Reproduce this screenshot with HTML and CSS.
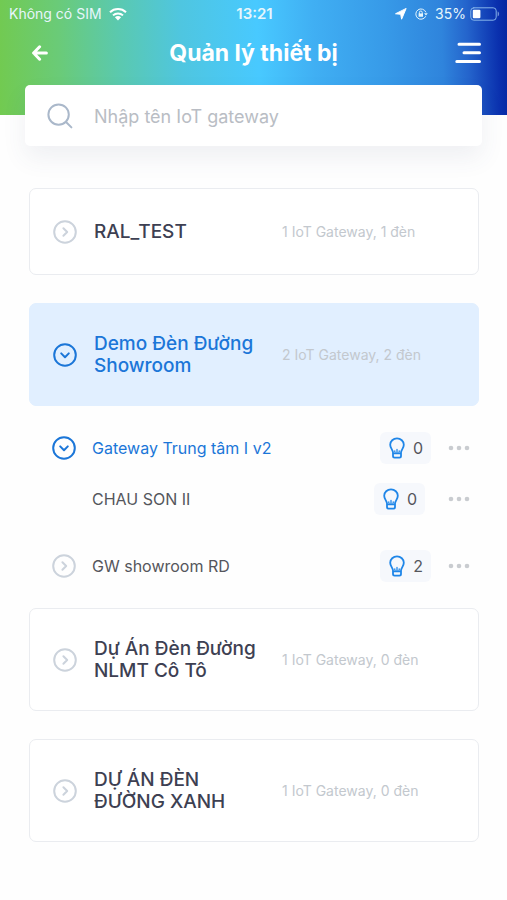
FILE: index.html
```html
<!DOCTYPE html>
<html lang="vi">
<head>
<meta charset="utf-8">
<meta name="viewport" content="width=device-width, initial-scale=1">
<title>Quản lý thiết bị</title>
<link rel="stylesheet" href="styles.css">
</head>
<body>
<svg class="sprite" aria-hidden="true">
  <symbol id="chevron-right" viewBox="0 0 24 24"><circle cx="12" cy="12" r="10.8"/><path d="M10.4 8.2 14.2 12l-3.8 3.8"/></symbol>
  <symbol id="chevron-down" viewBox="0 0 24 24"><circle cx="12" cy="12" r="10.8"/><path d="M8.2 10.4 12 14.2l3.8-3.8"/></symbol>
  <symbol id="bulb" viewBox="0 0 16 22"><path stroke-width="1.8" d="M4 15.4C3.7 12.6 1.2 11.2 1.2 7.8a6.8 6.4 0 0 1 13.6 0c0 3.4-2.5 4.8-2.8 7.6v3.6a1.6 1.6 0 0 1-1.6 1.6H5.6A1.6 1.6 0 0 1 4 19Z"/><path stroke-width="1.3" d="M4.4 16.6h7.2M8 16.4v-4M5.8 13.8v1.2a1.4 1.4 0 0 0 1.4 1.4M10.2 13.8v1.2a1.4 1.4 0 0 1-1.4 1.4"/></symbol>
  <symbol id="dots" viewBox="0 0 22 6"><circle cx="3" cy="3" r="2.3"/><circle cx="11" cy="3" r="2.3"/><circle cx="19" cy="3" r="2.3"/></symbol>
</svg>

<header class="header">
  <div class="status">
    <div class="status-left">
      <span>Không có SIM</span>
      <svg class="wifi" viewBox="0 0 18 14" aria-hidden="true"><path d="M1 5.2a11.6 11.6 0 0 1 16 0M4 8.4a7.2 7.2 0 0 1 10 0"/><path class="solid" d="M5.9 10.3a4.6 4.6 0 0 1 6.2 0L9 13.5Z"/></svg>
    </div>
    <time class="clock">13:21</time>
    <div class="status-right">
      <svg class="location" viewBox="0 0 12 12" aria-hidden="true"><path d="M11 .8 6.6 11.2 5.7 6.3.9 5.8Z"/></svg>
      <svg class="lock" viewBox="0 0 14 12" aria-hidden="true"><path d="M11.6 8.6A5.2 5.2 0 1 1 11.8 4"/><path d="M5.4 5.6V4.4a1.4 1.4 0 0 1 2.8 0v1.2"/><path class="solid" d="M4.6 5.4H9v3.4H4.6ZM10 5.2h3.8L12 7.6Z"/></svg>
      <span class="percent">35%<svg class="battery" viewBox="0 0 30 14" aria-hidden="true"><rect class="shell" x=".8" y=".8" width="25.4" height="12.4" rx="3"/><rect class="charge" x="2.8" y="2.8" width="7.6" height="8.4" rx="1"/><path class="cap" d="M27.6 4.6c2 .6 2 4.2 0 4.8Z"/></svg></span>
    </div>
  </div>
  <div class="titlebar">
    <button class="icon-button back-button" type="button" aria-label="Quay lại">
      <svg class="back" viewBox="0 0 16 16" aria-hidden="true"><path d="M14.4 8H1.8M7.6 1.8 1.6 8l6 6.2"/></svg>
    </button>
    <h1 class="title">Quản lý thiết bị</h1>
    <button class="icon-button menu-button" type="button" aria-label="Menu">
      <svg class="menu" viewBox="0 0 26 22" aria-hidden="true"><path d="M4 2.2h20.5M9 10.8h15.5M1.8 19.4h22.7"/></svg>
    </button>
  </div>
</header>

<main class="content">
  <label class="search">
    <svg class="magnifier" viewBox="0 0 26 26" aria-hidden="true"><circle cx="11.6" cy="11.6" r="10.2"/><path d="m19 19 5.4 5.4"/></svg>
    <input class="search-input" type="search" placeholder="Nhập tên IoT gateway" aria-label="Nhập tên IoT gateway">
  </label>

  <div class="projects">
    <button class="card short" type="button" aria-expanded="false">
      <svg class="toggle" aria-hidden="true"><use href="#chevron-right"/></svg>
      <span class="name">RAL_TEST</span>
      <span class="summary">1 IoT Gateway, 1 đèn</span>
    </button>

    <section class="group">
      <button class="card open" type="button" aria-expanded="true">
        <svg class="toggle active" aria-hidden="true"><use href="#chevron-down"/></svg>
        <span class="name">Demo Đèn Đường Showroom</span>
        <span class="summary">2 IoT Gateway, 2 đèn</span>
      </button>
      <ul class="gateways">
        <li class="gateway">
          <button class="icon-button" type="button" aria-label="Thu gọn"><svg class="toggle active" aria-hidden="true"><use href="#chevron-down"/></svg></button>
          <span class="gateway-name active-name">Gateway Trung tâm I v2</span>
          <span class="count"><svg class="bulb" aria-hidden="true"><use href="#bulb"/></svg>0</span>
          <button class="icon-button" type="button" aria-label="Tùy chọn"><svg class="dots" aria-hidden="true"><use href="#dots"/></svg></button>
        </li>
        <li class="gateway child">
          <span class="gateway-name">CHAU SON II</span>
          <span class="count"><svg class="bulb" aria-hidden="true"><use href="#bulb"/></svg>0</span>
          <button class="icon-button" type="button" aria-label="Tùy chọn"><svg class="dots" aria-hidden="true"><use href="#dots"/></svg></button>
        </li>
        <li class="gateway">
          <button class="icon-button" type="button" aria-label="Mở rộng"><svg class="toggle" aria-hidden="true"><use href="#chevron-right"/></svg></button>
          <span class="gateway-name">GW showroom RD</span>
          <span class="count"><svg class="bulb" aria-hidden="true"><use href="#bulb"/></svg>2</span>
          <button class="icon-button" type="button" aria-label="Tùy chọn"><svg class="dots" aria-hidden="true"><use href="#dots"/></svg></button>
        </li>
      </ul>
    </section>

    <button class="card" type="button" aria-expanded="false">
      <svg class="toggle" aria-hidden="true"><use href="#chevron-right"/></svg>
      <span class="name">Dự Án Đèn Đường NLMT Cô Tô</span>
      <span class="summary">1 IoT Gateway, 0 đèn</span>
    </button>

    <button class="card" type="button" aria-expanded="false">
      <svg class="toggle" aria-hidden="true"><use href="#chevron-right"/></svg>
      <span class="name">DỰ ÁN ĐÈN ĐƯỜNG XANH</span>
      <span class="summary">1 IoT Gateway, 0 đèn</span>
    </button>
  </div>
</main>
</body>
</html>
```
FILE: styles.css
```css
* {
  box-sizing: border-box;
}

body {
  margin: 0;
  background: #fefefe;
  color: #3d4052;
  font-family: Inter, "Noto Sans", sans-serif;
}

button {
  margin: 0;
  font: inherit;
  color: inherit;
  cursor: pointer;
}

svg {
  display: block;
  flex: none;
  fill: none;
  stroke: currentColor;
  stroke-width: 2;
  stroke-linecap: round;
  stroke-linejoin: round;
}

.sprite {
  display: none;
}

.icon-button {
  display: flex;
  padding: 0;
  border: 0;
  background: none;
}

.header {
  padding-bottom: 37px;
  background: linear-gradient(88deg, #72ca50 0%, #6acb78 12%, #5ac9b0 24%, #4fc6e0 36%, #48c9ff 51%, #40aff3 62%, #379ae8 76%, #2f84dc 87%, #2464cc 92%, #0a30ae 98%, #0526a0 100%);
  color: #fff;
}

.status {
  display: grid;
  grid-template-columns: 1fr auto 1fr;
  align-items: center;
  height: 27px;
  padding: 0 7px 0 9px;
  font-size: 14px;
}

.status-left,
.status-right {
  display: flex;
  align-items: center;
  gap: 7px;
  color: #e6f6fc;
}

.status-right {
  justify-content: flex-end;
}

.percent {
  display: flex;
  align-items: center;
  gap: 4px;
}

.clock {
  font-size: 15px;
  font-weight: 600;
  color: #e6f6fc;
}

.wifi {
  width: 18px;
  height: 14px;
  color: #fff;
  stroke-linecap: butt;
}

.location {
  width: 12px;
  height: 12px;
  color: #fff;
  fill: currentColor;
  stroke-width: 1;
}

.lock {
  width: 14px;
  height: 12px;
  stroke-width: 1;
}

.solid {
  fill: currentColor;
  stroke: none;
}

.battery {
  width: 30px;
  height: 14px;
  stroke: none;
}

.shell {
  stroke: #86b4ea;
  stroke-width: 1;
}

.charge {
  fill: #fff;
}

.cap {
  fill: #7091d8;
}

.titlebar {
  display: grid;
  grid-template-columns: 1fr auto 1fr;
  align-items: center;
  height: 51px;
  padding: 0 26px;
}

.back-button {
  padding-left: 6px;
}

.menu-button {
  justify-self: end;
}

.back {
  width: 16px;
  height: 16px;
  stroke-width: 3;
}

.menu {
  width: 26px;
  height: 22px;
  stroke-width: 3;
}

.title {
  margin: 0;
  font-size: 23px;
  line-height: 28px;
  font-weight: 700;
}

.search {
  display: flex;
  align-items: center;
  gap: 21px;
  height: 61px;
  margin: -30px 25px 0;
  padding: 0 22px;
  border-radius: 5px;
  background: #fff;
  box-shadow: 0 12px 24px rgba(60, 80, 110, 0.08);
}

.magnifier {
  width: 26px;
  height: 26px;
  color: #aab8ca;
}

.search-input {
  flex: 1;
  min-width: 0;
  padding: 2px 0 0;
  border: 0;
  outline: 0;
  background: none;
  color: #3d4052;
  font: inherit;
  font-size: 18px;
}

.search-input::placeholder {
  color: #b9bdc4;
  opacity: 1;
}

.projects {
  display: flex;
  flex-direction: column;
  gap: 28px;
  padding: 42px 28px 28px 29px;
}

.card {
  display: grid;
  grid-template-columns: 24px 171px 1fr;
  column-gap: 17px;
  align-items: center;
  width: 100%;
  min-height: 103px;
  padding: 0 23px;
  border: 1px solid #eaecf0;
  border-radius: 7px;
  background: #fff;
  text-align: left;
}

.card.short {
  min-height: 87px;
}

.card.open {
  border-color: #e1efff;
  background: #e1efff;
}

.open .name {
  color: #1b76d8;
}

.toggle {
  width: 24px;
  height: 24px;
  color: #ccd3dc;
}

.toggle.active {
  color: #1b76d8;
}

.name {
  font-size: 19px;
  line-height: 22px;
  font-weight: 500;
}

.summary {
  color: #c3c8ce;
  font-size: 14px;
}

.gateways {
  display: flex;
  flex-direction: column;
  gap: 17px;
  margin: 0 0 -3px;
  padding: 25px 9px 0 23px;
  list-style: none;
}

.gateway {
  display: flex;
  align-items: center;
  min-height: 34px;
}

.gateway.child {
  padding-left: 24px;
}

.child + .gateway {
  margin-top: 16px;
}

.child .count {
  margin-right: 23px;
}

.gateway-name {
  flex: 1;
  margin-left: 16px;
  color: #55565c;
  font-size: 16px;
}

.active-name {
  color: #1b76d8;
}

.count {
  display: flex;
  align-items: center;
  gap: 8px;
  height: 32px;
  margin-right: 17px;
  padding: 0 8px 0 9px;
  border-radius: 6px;
  background: #f6f8fc;
  color: #55565c;
  font-size: 16px;
}

.bulb {
  width: 16px;
  height: 22px;
  color: #1f86e8;
}

.dots {
  width: 22px;
  height: 6px;
  color: #c9ccd0;
  fill: currentColor;
  stroke: none;
}
```
